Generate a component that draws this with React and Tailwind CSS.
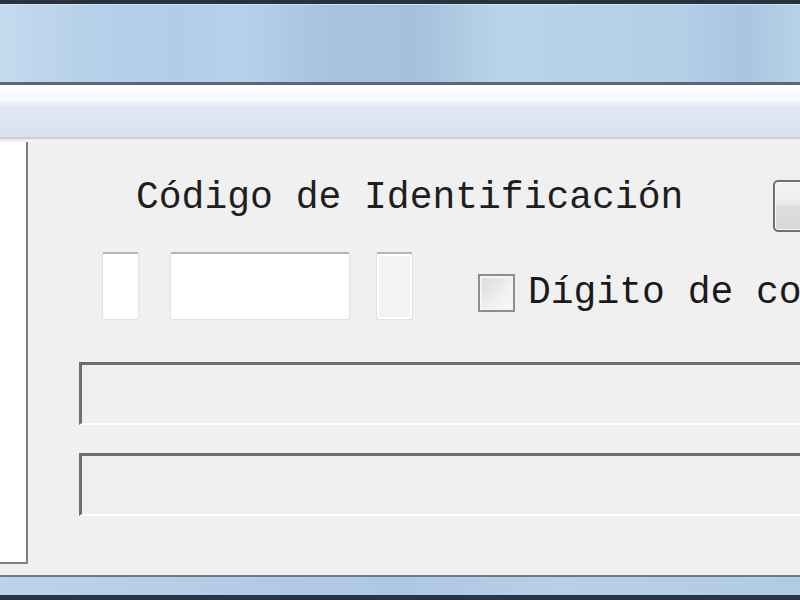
export default function App() {
  const mono = { fontFamily: '"Liberation Mono", "Courier New", monospace' };
  return (
    <div className="w-[800px] h-[600px] overflow-hidden flex flex-col bg-[#f0f0f0]">
      {/* window top frame */}
      <div className="h-[4px] shrink-0 bg-[#2a3240]" />
      <div className="h-[78px] shrink-0 bg-[linear-gradient(90deg,#c6daee_0%,#b7d0ea_10%,#b3cde9_22%,#b7d1eb_30%,#a9c4df_40%,#a6c1dc_52%,#afc8e2_57%,#b9d3ec_62%,#b7d1eb_75%,#b4cee8_85%,#aac5df_93%,#b8d1ea_100%)] border-t border-[#d3e3f3]" />
      <div className="h-[3px] shrink-0 bg-[#5c6674]" />
      {/* menu strip */}
      <div className="h-[52px] shrink-0 bg-[linear-gradient(180deg,#ffffff_0%,#f6f8fc_30%,#e2e7f3_42%,#dbe1ef_100%)]" />
      <div className="h-[2px] shrink-0 bg-[#c9ced8]" />
      {/* content */}
      <div className="flex-1 flex flex-row min-h-0">
        <div className="mt-[3px] h-[422px] w-[28px] shrink-0 bg-white border-r-2 border-b-2 border-[#7f7f7f]" />
        <div className="flex-1 flex flex-col pt-[40px] overflow-hidden">
          {/* row 1 */}
          <div className="flex flex-row items-start pl-[108px]">
            <div className="w-[637px] shrink-0 text-[38px] leading-[38px] text-[#1e1e1e]" style={mono}>
              Código de Identificación
            </div>
            <div className="mt-[1px] w-[80px] h-[52px] shrink-0 rounded-[5px] border-2 border-[#707070] bg-[linear-gradient(180deg,#f3f3f3_0%,#ececec_45%,#dedede_50%,#d6d6d6_100%)] shadow-[inset_0_0_0_1px_#fbfbfb]" />
          </div>
          {/* row 2 */}
          <div className="flex flex-row items-start mt-[20px] pl-[74px]">
            <div className="w-[37px] h-[68px] shrink-0 rounded-[3px] bg-white border border-[#e2e2e2] border-t-2 border-t-[#b4b4b4]" />
            <div className="ml-[31px] w-[180px] h-[68px] shrink-0 rounded-[3px] bg-white border border-[#e2e2e2] border-t-2 border-t-[#b4b4b4]" />
            <div className="ml-[26px] w-[37px] h-[68px] shrink-0 rounded-[3px] bg-[#f3f3f3] border border-[#e0e0e0] border-t-2 border-t-[#b4b4b4] shadow-[inset_0_0_0_2px_#ffffff]" />
            <div className="ml-[65px] mt-[22px] w-[37px] h-[38px] shrink-0 border-2 border-[#8e8e8e] bg-[linear-gradient(135deg,#dadada_0%,#f0f0f0_60%,#fafafa_100%)] shadow-[inset_0_0_0_2px_#f4f4f4]" />
            <div className="ml-[13px] mt-[22px] shrink-0 whitespace-nowrap text-[38px] leading-[38px] text-[#1a1a1a]" style={mono}>
              Dígito de control
            </div>
          </div>
          {/* row 3 */}
          <div className="mt-[42px] ml-[51px] h-[63px] shrink-0 w-[800px] bg-[#efefef] border-t-[3px] border-l-[3px] border-[#6e6e6e] border-b-2 border-b-white" />
          <div className="mt-[28px] ml-[51px] h-[63px] shrink-0 w-[800px] bg-[#efefef] border-t-[3px] border-l-[3px] border-[#6e6e6e] border-b-2 border-b-white" />
        </div>
      </div>
      {/* bottom frame */}
      <div className="h-[2px] shrink-0 bg-[#6c7886]" />
      <div className="h-[18px] shrink-0 bg-[linear-gradient(90deg,#bcd3ec_0%,#b3cbe6_30%,#aec7e2_50%,#b7cfe9_70%,#b2cbe5_100%)]" />
      <div className="h-[5px] shrink-0 bg-[#2b3340]" />
    </div>
  );
}
